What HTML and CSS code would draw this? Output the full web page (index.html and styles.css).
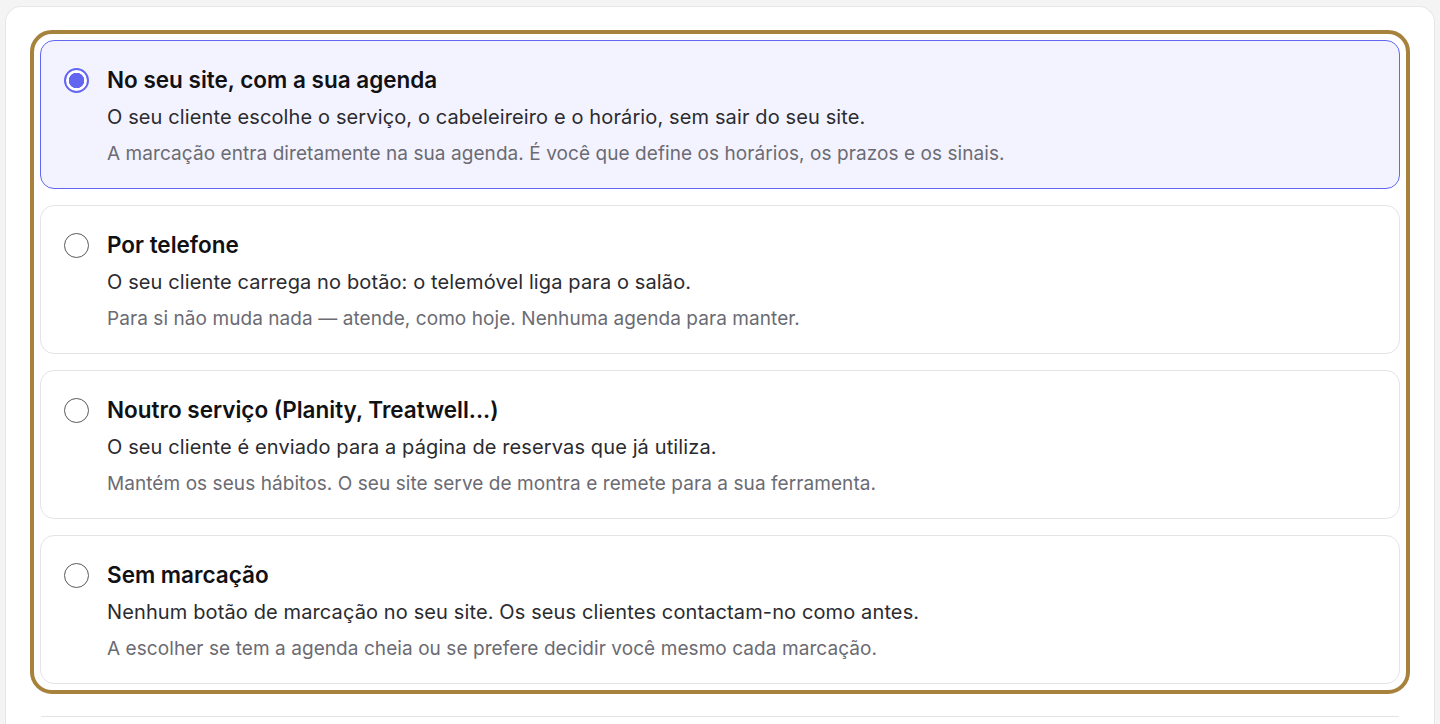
FILE: index.html
```html
<!DOCTYPE html>
<html lang="pt">
<head>
  <meta charset="UTF-8">
  <meta name="viewport" content="width=device-width, initial-scale=1.0">
  <title>Marcação</title>
  <link rel="stylesheet" href="styles.css">
</head>
<body>
  <div class="panel">
    <div class="options">
      <label class="option selected">
        <input type="radio" name="booking" class="radio" checked>
        <div class="option-text">
          <div class="option-title">No seu site, com a sua agenda</div>
          <div class="option-desc">O seu cliente escolhe o serviço, o cabeleireiro e o horário, sem sair do seu site.</div>
          <div class="option-note">A marcação entra diretamente na sua agenda. É você que define os horários, os prazos e os sinais.</div>
        </div>
      </label>
      <label class="option">
        <input type="radio" name="booking" class="radio">
        <div class="option-text">
          <div class="option-title">Por telefone</div>
          <div class="option-desc">O seu cliente carrega no botão: o telemóvel liga para o salão.</div>
          <div class="option-note">Para si não muda nada — atende, como hoje. Nenhuma agenda para manter.</div>
        </div>
      </label>
      <label class="option">
        <input type="radio" name="booking" class="radio">
        <div class="option-text">
          <div class="option-title">Noutro serviço (Planity, Treatwell...)</div>
          <div class="option-desc">O seu cliente é enviado para a página de reservas que já utiliza.</div>
          <div class="option-note">Mantém os seus hábitos. O seu site serve de montra e remete para a sua ferramenta.</div>
        </div>
      </label>
      <label class="option">
        <input type="radio" name="booking" class="radio">
        <div class="option-text">
          <div class="option-title">Sem marcação</div>
          <div class="option-desc">Nenhum botão de marcação no seu site. Os seus clientes contactam-no como antes.</div>
          <div class="option-note">A escolher se tem a agenda cheia ou se prefere decidir você mesmo cada marcação.</div>
        </div>
      </label>
    </div>
    <div class="divider"></div>
  </div>
</body>
</html>
```

FILE: styles.css
```css
body {
  margin: 0;
  font-family: Inter, "Noto Sans", sans-serif;
  background-color: #f4f4f5;
  color: #18181b;
  height: 724px;
  overflow: hidden;
}

.panel {
  margin: 6px 5px 0 5px;
  padding: 24px 25px 0 25px;
  background-color: white;
  border: 1px solid #e7e7e9;
  border-bottom: none;
  border-radius: 16px 16px 0 0;
  height: 760px;
}

.options {
  display: flex;
  flex-direction: column;
  gap: 16px;
  margin: 9px 9px 0 9px;
  outline: 4px solid #a6823c;
  outline-offset: 6px;
  border-radius: 12px;
}

.option {
  display: flex;
  align-items: flex-start;
  gap: 18px;
  padding: 25px 23px 21px 23px;
  border: 1px solid #e4e4e7;
  border-radius: 14px;
  background-color: white;
  cursor: pointer;
}

.option.selected {
  background-color: #f3f3ff;
  border-color: #6366f1;
}

.radio {
  appearance: none;
  margin: 2px 0 0 0;
  width: 25px;
  height: 25px;
  flex-shrink: 0;
  border: 1.5px solid #5a5a5e;
  border-radius: 50%;
  background-color: white;
  cursor: pointer;
}

.radio:checked {
  border: 2px solid #6366f1;
  background: radial-gradient(circle, #6366f1 0 7.5px, white 8px);
}

.option-text {
  display: flex;
  flex-direction: column;
}

.option-title {
  font-size: 22.5px;
  line-height: 28px;
  font-weight: 600;
  color: #111114;
}

.option-desc {
  margin-top: 9px;
  font-size: 20px;
  line-height: 28px;
  letter-spacing: 0.12px;
  color: #2b2b30;
}

.option-note {
  margin-top: 10px;
  font-size: 19px;
  line-height: 26px;
  letter-spacing: 0.07px;
  color: #6b6b73;
}

.divider {
  margin: 32px 10px 0 10px;
  height: 1px;
  background-color: #e4e4e7;
}
```
